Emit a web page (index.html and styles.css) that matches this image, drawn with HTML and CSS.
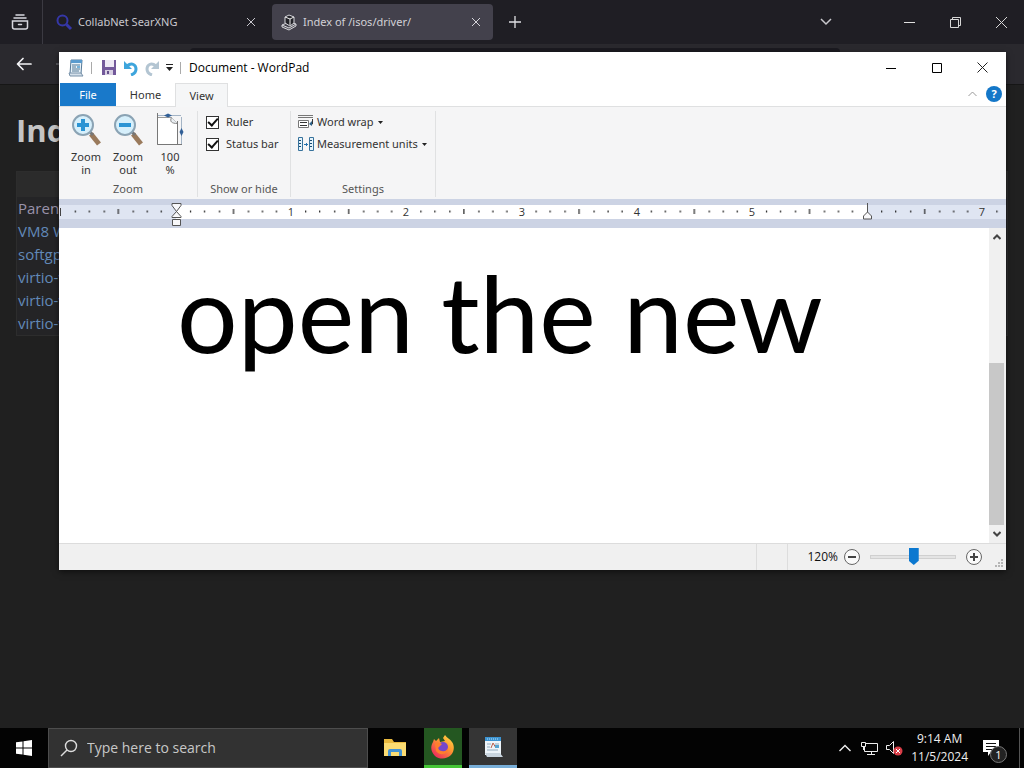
FILE: index.html
```html
<!DOCTYPE html>
<html lang="en">
<head>
<meta charset="utf-8">
<title>Desktop</title>
<link rel="stylesheet" href="styles.css">
</head>
<body>
<div class="desktop">
  <div class="browser">
    <div class="tabstrip">
      <button class="recent" aria-label="Recent browsing">
        <svg width="20" height="20" viewBox="0 0 20 20" fill="none" stroke="#d8d7de" stroke-width="1.500" stroke-linecap="round"><path d="M6 3h8M4 6h12"/><path d="M2.500 9h15v6q0 2-2 2h-11q-2 0-2-2zM8.500 12.500h3"/></svg>
      </button>
      <div class="tab">
        <svg width="17" height="17" viewBox="0 0 17 17" fill="none" stroke="#3537a8"><circle cx="6.500" cy="6.500" r="5" stroke-width="2"/><path d="M10.500 10.500l4.500 4.500" stroke-width="3"/></svg>
        <span class="tab-name">CollabNet SearXNG</span>
        <button class="tab-close" aria-label="Close tab"><svg width="8" height="8" viewBox="0 0 8 8" stroke="#c8c7ce"><path d="M0 0l8 8M8 0L0 8"/></svg></button>
      </div>
      <div class="tab active">
        <svg width="17" height="17" viewBox="0 0 17 17"><path d="M1 11l7-3 7 2-7 4zM1 11v2l7 3 7-4v-2" fill="#55545c" stroke="#d5d5da"/><path d="M4 3l4-2 5 2v6l-4 3-5-3z" fill="#222228" stroke="#d5d5da"/><path d="M4 3l5 2 4-2M9 5v6" fill="none" stroke="#eee"/></svg>
        <span class="tab-name">Index of /isos/driver/</span>
        <button class="tab-close" aria-label="Close tab"><svg width="8" height="8" viewBox="0 0 8 8" stroke="#d5d4da"><path d="M0 0l8 8M8 0L0 8"/></svg></button>
      </div>
      <button class="new-tab" aria-label="New tab"><svg width="12" height="12" viewBox="0 0 12 12" stroke="#e0e0e4" stroke-width="1.300"><path d="M6 0v12M0 6h12"/></svg></button>
      <div class="strip-end">
        <button class="list-tabs" aria-label="List all tabs"><svg width="12" height="8" viewBox="0 0 12 8" fill="none" stroke="#c9c9cd" stroke-width="1.500"><path d="M1 1l5 5 5-5"/></svg></button>
        <button class="caption" aria-label="Minimize"><svg width="11" height="11" viewBox="0 0 11 11" stroke="#e0e0e0"><path d="M0 5.500h11"/></svg></button>
        <button class="caption" aria-label="Restore"><svg width="11" height="11" viewBox="0 0 11 11" fill="none" stroke="#d8d8d8"><path d="M.5 2.500h8v8h-8zM2.500 2V.5h8v8H9"/></svg></button>
        <button class="caption" aria-label="Close"><svg width="11" height="11" viewBox="0 0 11 11" stroke="#d8d8d8"><path d="M0 0l11 11M11 0L0 11"/></svg></button>
      </div>
    </div>
    <div class="navbar">
      <button aria-label="Back"><svg width="16" height="14" viewBox="0 0 16 14" fill="none" stroke="#f4f4f6" stroke-width="1.700" stroke-linecap="round" stroke-linejoin="round"><path d="M15 7H2M7 1.500L1.500 7 7 12.500"/></svg></button>
      <button aria-label="Forward"><svg width="16" height="14" viewBox="0 0 16 14" fill="none" stroke="#66656c" stroke-width="1.500"><path d="M0 7h14M9 1.500L14.500 7 9 12.500"/></svg></button>
      <input class="url" type="text" aria-label="Address">
    </div>
    <div class="page">
      <h1>Index</h1>
      <table class="listing">
        <thead><tr><th></th></tr></thead>
        <tbody>
          <tr><td><a class="visited" href="#">Parent</a></td></tr>
          <tr><td><a href="#">VM8 W</a></td></tr>
          <tr><td><a href="#">softgpu</a></td></tr>
          <tr><td><a href="#">virtio-win</a></td></tr>
          <tr><td><a href="#">virtio-win</a></td></tr>
          <tr><td><a href="#">virtio-win</a></td></tr>
        </tbody>
      </table>
    </div>
  </div>

  <div class="wordpad">
    <div class="titlebar">
      <svg width="16" height="18" viewBox="0 0 16 18"><path d="M3 1h11l-1 14H2z" fill="#e9f3fa" stroke="#557896"/><path d="M3 1h11v3H3z" fill="#5a9bce"/><path d="M4 6h8M4 8h4M4 10h8M4 12h7" stroke="#527692"/><path d="M9 7h3v2H9z" fill="#75b2da"/><path d="M1 14h12l2 3H2z" fill="#d4e0ea" stroke="#7690a8"/></svg>
      <span class="bar"></span>
      <button class="save" aria-label="Save"><svg width="14" height="15" viewBox="0 0 14 15"><path d="M0 0h14v15H0z" fill="#73599b"/><path d="M3 0h9v7H3z" fill="#eee9f5"/><path d="M3 10h8v5H3z" fill="#d8d0e3"/><path d="M5 11h2v3H5z" fill="#65518b"/></svg></button>
      <button aria-label="Undo"><svg width="14" height="16" viewBox="0 0 14 16"><path d="M0 1v8h8z" fill="#3ea5dc"/><path d="M3 6c5-4 9-1 9 3 0 3-2 5-5 6" fill="none" stroke="#3ea5dc" stroke-width="3"/></svg></button>
      <button aria-label="Redo"><svg width="14" height="16" viewBox="0 0 14 16"><path d="M14 1v8H6z" fill="#b3c5d2"/><path d="M11 6c-5-4-9-1-9 3 0 3 2 5 5 6" fill="none" stroke="#b3c5d2" stroke-width="3"/></svg></button>
      <button aria-label="Customize toolbar"><svg width="7" height="7" viewBox="0 0 7 7"><path d="M0 0h7v1H0zM0 3h7L3.500 7z" fill="#222"/></svg></button>
      <span class="bar"></span>
      <span class="title">Document - WordPad</span>
      <div class="captions">
        <button class="caption" aria-label="Minimize"><svg width="10" height="10" viewBox="0 0 10 10" stroke="#000"><path d="M0 5.500h10"/></svg></button>
        <button class="caption" aria-label="Maximize"><svg width="10" height="10" viewBox="0 0 10 10" fill="none" stroke="#000"><path d="M.5.5h9v9h-9z"/></svg></button>
        <button class="caption" aria-label="Close"><svg width="11" height="11" viewBox="0 0 11 11" stroke="#222"><path d="M.5.5l10 10M10.500.5l-10 10"/></svg></button>
      </div>
    </div>

    <div class="ribbon-tabs">
      <button class="file">File</button>
      <button class="rtab">Home</button>
      <button class="rtab current">View</button>
      <div class="tabs-end">
        <button aria-label="Collapse ribbon"><svg width="9" height="6" viewBox="0 0 9 6" fill="none" stroke="#999"><path d="M.5 5l4-4 4 4"/></svg></button>
        <button class="help" aria-label="Help">?</button>
      </div>
    </div>

    <div class="ribbon">
      <section class="group zoom-group">
        <div class="tools">
          <button class="tool"><svg width="30" height="33" viewBox="0 0 30 33"><path d="M20 21l8 10" stroke="#9a7a5c" stroke-width="5"/><path d="M18 18l4 4" stroke="#777" stroke-width="3"/><circle cx="12" cy="12" r="10" fill="#d6effb" stroke="#8ba3b4" stroke-width="2"/><path d="M12 6v12M6 12h12" stroke="#2b94d4" stroke-width="4"/></svg>Zoom<br>in</button>
          <button class="tool"><svg width="30" height="33" viewBox="0 0 30 33"><path d="M20 21l8 10" stroke="#9a7a5c" stroke-width="5"/><path d="M18 18l4 4" stroke="#777" stroke-width="3"/><circle cx="12" cy="12" r="10" fill="#d6effb" stroke="#8ba3b4" stroke-width="2"/><path d="M6 12h12" stroke="#2b94d4" stroke-width="4"/></svg>Zoom<br>out</button>
          <button class="tool"><svg width="30" height="33" viewBox="0 0 30 33"><path d="M2.500 4.500h14l6 6v21h-20z" fill="#fff" stroke="#999"/><path d="M16.500 4.500c-2 4 0 6 6 6" fill="#e9eef2" stroke="#888"/><path d="M2.500 0v31.500M27 31.500H2.500M22.500 8v23" fill="none" stroke="#777"/><path d="M3 2.500h23M26.500 4v27" stroke="#a4b4c5"/><path d="M9 2.500l4-2v4zM17 2.500l-4-2v4zM26.500 15l-2 4h4zM26.500 23l-2-4h4z" fill="#315f96"/></svg>100<br>%</button>
        </div>
        <h2>Zoom</h2>
      </section>
      <section class="group show-group">
        <div class="options">
          <label><input type="checkbox" checked>Ruler</label>
          <label><input type="checkbox" checked>Status bar</label>
        </div>
        <h2>Show or hide</h2>
      </section>
      <section class="group settings-group">
        <div class="options">
          <button><svg width="16" height="16" viewBox="0 0 16 16" fill="none"><path d="M0 1.500h15M0 3.500h15" stroke="#777"/><path d="M.5 6.500h10v7H.5z" fill="#fff" stroke="#777"/><path d="M2 8.500h7M2 11.500h7M14.500 5v5h-2" stroke="#333"/><path d="M11 10l3-3v5z" fill="#2d6289"/></svg>Word wrap<svg class="drop" width="5" height="3" viewBox="0 0 5 3"><path d="M0 0h5L2.500 3z" fill="#222"/></svg></button>
          <button><svg width="16" height="16" viewBox="0 0 16 16" fill="none"><path d="M.5 1.500h4v13h-4zM11.500 1.500h4v13h-4z" fill="#e5f3fb" stroke="#37729c"/><path d="M1 4.500h2M1 7.500h2M1 10.500h2M12 4.500h2M12 7.500h2M12 10.500h2" stroke="#174a72"/><path d="M6 8.500h4M8.500 7v3" stroke="#2472ae"/></svg>Measurement units<svg class="drop" width="5" height="3" viewBox="0 0 5 3"><path d="M0 0h5L2.500 3z" fill="#222"/></svg></button>
        </div>
        <h2>Settings</h2>
      </section>
    </div>

    <div class="ruler">
      <svg width="100%" height="29">
        <defs><pattern id="inch" x="117" y="0" width="115.200" height="29" patternUnits="userSpaceOnUse"><path d="M14.500 11.500v2M28.500 11.500v2M43.500 11.500v2M57.500 10v5M72.500 11.500v2M86.500 11.500v2M100.500 11.500v2" stroke="#222" stroke-width="1.200"/></pattern></defs>
        <rect width="100%" height="29" fill="#ccd3e4"/>
        <rect y="6" width="100%" height="14" fill="#dfe5f2"/>
        <rect x="117" y="6" width="691" height="14" fill="#fff"/>
        <rect width="100%" height="29" fill="url(#inch)"/>
        <path d="M1.500 9v8" stroke="#444"/>
        <g class="marks"><text x="232" y="17">1</text><text x="347" y="17">2</text><text x="463" y="17">3</text><text x="578" y="17">4</text><text x="693" y="17">5</text><text x="923" y="17">7</text></g>
        <path d="M113 4.500h9v2l-4.500 6-4.500-6zM117.500 12.500l4.500 5v1h-9v-1zM113.500 20.500h8v6h-8zM808.500 4v9l4 4v3h-8v-3l4-4" fill="#f8f8fa" stroke="#555"/>
      </svg>
    </div>

    <div class="document">
      <div class="paper" contenteditable="true" spellcheck="false" role="textbox" aria-label="Document text">open the new</div>
      <div class="scrollbar">
        <button aria-label="Scroll up"><svg width="8" height="6" viewBox="0 0 8 6" fill="none" stroke="#444" stroke-width="2"><path d="M.5 5L4 1.500 7.500 5"/></svg></button>
        <div class="track"><div class="thumb"></div></div>
        <button aria-label="Scroll down"><svg width="8" height="6" viewBox="0 0 8 6" fill="none" stroke="#444" stroke-width="2"><path d="M.5 1L4 4.500 7.500 1"/></svg></button>
      </div>
    </div>

    <div class="statusbar">
      <span class="pane"></span>
      <label class="percent" for="zoom">120%</label>
      <button aria-label="Zoom out"><svg width="16" height="16" viewBox="0 0 16 16" fill="#fafafa" stroke="#666"><circle cx="8" cy="8" r="7.500"/><path d="M4 8h8" stroke="#444" stroke-width="2"/></svg></button>
      <input id="zoom" type="range" min="0" max="100" value="51">
      <button aria-label="Zoom in"><svg width="16" height="16" viewBox="0 0 16 16" fill="#fafafa" stroke="#666"><circle cx="8" cy="8" r="7.500"/><path d="M4 8h8M8 4v8" stroke="#444" stroke-width="2"/></svg></button>
      <svg class="grip" width="10" height="10" viewBox="0 0 10 10" fill="#b5b5b5"><path d="M7 0h2v2H7zM7 3h2v2H7zM4 3h2v2H4zM7 6h2v2H7zM4 6h2v2H4zM1 6h2v2H1z"/></svg>
    </div>
  </div>

  <div class="taskbar">
    <button class="start" aria-label="Start"><svg width="16" height="16" viewBox="0 0 16 16" fill="#fff"><path d="M0 2.300l6.500-.9v6.100H0zM7.500 1.200L16 0v7.500H7.500zM0 8.500h6.500v6.100L0 13.700zM7.500 8.500H16V16l-8.500-1.200z"/></svg></button>
    <label class="search">
      <svg width="18" height="18" viewBox="0 0 18 18" fill="none" stroke="#ddd" stroke-width="1.400"><circle cx="11" cy="7" r="5.500"/><path d="M7 11l-6 6"/></svg>
      <input type="text" placeholder="Type here to search" aria-label="Search">
    </label>
    <div class="apps">
      <button class="app" aria-label="File Explorer"><svg width="22" height="20" viewBox="0 0 22 20"><path d="M0 1h8l2 3h12v14H0z" fill="#e9b93e"/><path d="M0 5h22v13H0z" fill="#fbdc72"/><path d="M4 18v-5q0-2 2-2h10q2 0 2 2v5h-3v-4H7v4z" fill="#4393d4"/></svg></button>
      <button class="app firefox" aria-label="Firefox"><svg width="24" height="24" viewBox="0 0 24 24"><defs><linearGradient id="fire" x1="1" y1="0" x2="0.200" y2="1"><stop offset="0" stop-color="#ffe34b"/><stop offset=".45" stop-color="#ff9830"/><stop offset="1" stop-color="#ed2460"/></linearGradient></defs><path d="M2 7l1-3 2 2 3-3 1 4 5-1-2-3 2-3c2 3 5 4 7 7 3 4 2 10-1 13-4 4-11 5-16 1-4-4-5-9-2-14z" fill="url(#fire)"/><circle cx="12" cy="12" r="5" fill="#7546c9"/><path d="M4 9c2-3 5-1 7 0l-3 3c-2 1 0 4 3 4 3 1 5-1 6-3 0 7-9 8-12 3z" fill="#ff7e2d"/></svg></button>
      <button class="app current" aria-label="WordPad"><svg width="20" height="22" viewBox="0 0 20 22"><path d="M2 1h16v18H2z" fill="#edf4f9"/><path d="M2 1h16v4H2z" fill="#3c93d1"/><path d="M4 3h12" stroke="#b9e1f7" stroke-dasharray="1 1"/><path d="M4 8h4M4 11h3M4 14h11M12 8h4" stroke="#91aabd"/><path d="M8 12l2-5 3 5" fill="none" stroke="#b65d4c"/><path d="M12 9h4v3h-4z" fill="#56a4d1"/><path d="M2 17h15l3 4H4z" fill="#c9d5df"/></svg></button>
    </div>
    <div class="tray">
      <button aria-label="Show hidden icons"><svg width="12" height="8" viewBox="0 0 12 8" fill="none" stroke="#eee" stroke-width="1.400"><path d="M.5 7L6 1.500 11.500 7"/></svg></button>
      <button aria-label="Network"><svg width="17" height="15" viewBox="0 0 17 15" fill="none" stroke="#eee"><path d="M5 2.500h11.500v8H3.500V6M10.500 11v3M6 13.500h8"/><path d="M.5 1.500h4v4h-4zM2.500 6v3"/></svg></button>
      <button aria-label="Volume"><svg width="17" height="16" viewBox="0 0 17 16"><path d="M.5 5.500h3l4-4v12l-4-4h-3z" fill="none" stroke="#eee"/><circle cx="12" cy="11" r="4.500" fill="#d93e48"/><path d="M10 9l4 4M14 9l-4 4" stroke="#fff"/></svg></button>
      <div class="clock"><time>9:14 AM</time><time>11/5/2024</time></div>
      <button class="notice" aria-label="Notifications"><svg width="16" height="16" viewBox="0 0 16 16"><path d="M0 0h16v12H8l-3 4v-4H0z" fill="#fff"/><path d="M3 3.500h10M3 6.500h10M3 9.500h6" stroke="#111"/></svg><span class="badge">1</span></button>
    </div>
  </div>
</div>
</body>
</html>
```

FILE: styles.css
```css
* { box-sizing: border-box; }
body { margin: 0; background: #202020; font: 12px/16px "Noto Sans", "Open Sans", sans-serif; }
button { display: flex; align-items: center; justify-content: center; margin: 0; padding: 0; border: 0; background: none; color: inherit; font: inherit; }
input { font: inherit; }
svg { display: block; flex: none; }

.desktop { position: relative; display: flex; flex-direction: column; height: 100vh; overflow: hidden; }
.browser { flex: 1; display: flex; flex-direction: column; min-height: 0; overflow: hidden; }

.tabstrip { display: flex; align-items: center; height: 44px; background: #1f1e24; color: #c9c8ce; font: 11px/16px "Noto Sans", sans-serif; }
.recent { width: 43px; height: 44px; padding-right: 2px; border-right: 1px solid #3b3a42; }
.tab { display: flex; align-items: center; gap: 4px; width: 221px; height: 36px; margin-left: 4px; padding: 0 13px 0 9px; border-radius: 4px; }
.tab + .tab { margin-left: 4px; }
.tab.active { background: #43414c; color: #d2d1d7; }
.tab-name { flex: 1; padding-left: 1px; white-space: nowrap; }
.new-tab { width: 43px; height: 36px; }
.strip-end { display: flex; align-items: center; margin-left: auto; }
.list-tabs { width: 36px; height: 36px; margin-right: 42px; }
.caption { width: 46px; height: 30px; }

.navbar { display: flex; align-items: center; height: 41px; padding: 0 4px; background: #2a292e; border-bottom: 1px solid #161616; }
.navbar button { width: 40px; height: 32px; }
.url { flex: 1; height: 32px; margin: 0 180px 0 106px; border: 0; border-radius: 4px; background: #1b1a20; }

.page { flex: 1; padding: 26px 16px; color: #c4c4c4; font: 15px/23px "Open Sans", sans-serif; }
h1 { margin: 0 0 22px; font: bold 31px/38px "Open Sans", sans-serif; }
.listing { width: 100%; border: 1px solid #2d2d2d; border-spacing: 0; background: #242426; }
.listing th { height: 25px; padding: 0; background: #2b2b2b; }
.listing td { padding: 0 1px; }
.listing a { color: #6289b8; text-decoration: none; }
.listing a.visited { color: #9992aa; }

.wordpad { position: absolute; left: 59px; right: 18px; top: 52px; bottom: 198px; display: flex; flex-direction: column; background: #fff; color: #333; box-shadow: 0 2px 6px #0008; }
.titlebar { display: flex; align-items: center; height: 31px; padding-left: 9px; gap: 8px; color: #000; }
.titlebar svg { margin-right: -1px; }
.bar { width: 1px; height: 12px; background: #aaa; }
.save { padding: 0 1px 0 2px; }
.title { font: 12px/16px "Open Sans", sans-serif; white-space: nowrap; }
.captions { display: flex; margin-left: auto; padding-right: 1px; }

.ribbon-tabs { display: flex; height: 24px; padding-left: 1px; border-bottom: 1px solid #dfe0e1; font-size: 11px; }
.file { width: 56px; height: 23px; background: #1979ca; color: #fff; }
.rtab { width: 59px; height: 23px; }
.rtab.current { width: 53px; height: 24px; border: 1px solid #dfe0e1; border-bottom: 0; background: #f5f6f7; }
.tabs-end { display: flex; align-items: center; gap: 9px; margin-left: auto; padding: 0 4px 2px 0; }
.help { width: 16px; height: 16px; border-radius: 50%; background: #1477c8; color: #fff; font-weight: bold; }

.ribbon { display: flex; height: 92px; padding: 4px 0 2px; background: #f5f5f6; font-size: 11px; }
.group { display: flex; flex-direction: column; justify-content: space-between; border-right: 1px solid #e0e1e2; }
.group h2 { margin: 0; color: #555; font: 11px/16px "Noto Sans", sans-serif; text-align: center; }
.zoom-group { width: 139px; }
.show-group { width: 93px; }
.settings-group { width: 145px; }
.tools { display: flex; padding: 2px 0 0 6px; }
.tool { flex-direction: column; width: 42px; line-height: 13px; }
.tool svg { margin-bottom: 4px; }
.options { display: flex; flex-direction: column; padding-left: 8px; }
.settings-group .options { padding-left: 7px; }
.options label, .options button { display: flex; align-items: center; justify-content: flex-start; height: 22px; white-space: nowrap; }
.options label { gap: 7px; }
.options button { gap: 3px; }
.options input { appearance: none; width: 13px; height: 13px; margin: 0; border: 1px solid #333; background: #fff; display: grid; place-items: center; }
.options input:checked::before { content: ""; width: 8px; height: 4px; border: solid #111; border-width: 0 0 2px 2px; rotate: -48deg; margin-bottom: 3px; }
.options .drop { margin-left: 1px; }

.ruler { height: 29px; overflow: hidden; }
.marks { fill: #333; font: 11px "Open Sans", sans-serif; text-anchor: middle; }

.document { flex: 1; display: flex; min-height: 0; background: #fff; }
.paper { flex: 1; padding: 18px 118px; color: #000; font: 107px/132px Lato, sans-serif; white-space: nowrap; outline: 0; }
.scrollbar { display: flex; flex-direction: column; width: 17px; padding-right: 2px; background: #f0f0f0; }
.scrollbar button { height: 18px; }
.track { flex: 1; display: flex; flex-direction: column; justify-content: flex-end; }
.thumb { height: 58%; background: #c8c8c8; }

.statusbar { display: flex; align-items: center; height: 27px; border-top: 1px solid #dcdcdc; background: #f0f0f0; color: #111; }
.pane { width: 32px; height: 100%; margin-left: auto; border: solid #ddd; border-width: 0 1px; }
.percent { width: 56px; padding-right: 6px; text-align: right; font: 12px/16px "Open Sans", sans-serif; }
.statusbar input { appearance: none; width: 86px; height: 18px; margin: 0 10px; background: none; }
.statusbar input::-webkit-slider-runnable-track { height: 4px; border: 1px solid #d0d0d0; background: #e4e4e4; }
.statusbar input::-webkit-slider-thumb { appearance: none; width: 10px; height: 17px; margin-top: -8px; background: #0b78d0; clip-path: polygon(0 0, 100% 0, 100% 75%, 50% 100%, 0 75%); }
.grip { align-self: flex-end; margin: 0 2px 1px 12px; }

.taskbar { display: flex; height: 40px; background: #030303; color: #eee; }
.start { width: 48px; }
.search { flex: 0 1 320px; display: flex; align-items: center; gap: 9px; padding: 0 12px 0 11px; border: 1px solid #4d4d4d; background: #323232; }
.search input { flex: 1; min-width: 0; padding: 0; border: 0; background: none; outline: 0; color: #ccc; font: 14px/20px "Open Sans", sans-serif; }
.search input::placeholder { color: #c8c8c8; opacity: 1; }
.apps { display: flex; padding-left: 8px; }
.app { width: 38px; }
.app:first-child { margin-right: 10px; }
.firefox { background: #245721; border-bottom: 3px solid #45c636; }
.app.current { width: 48px; margin-left: 7px; background: #353535; border-bottom: 3px solid #78aed8; }
.tray { display: flex; align-items: center; gap: 8px; margin-left: auto; margin-right: 4px; padding-right: 4px; border-right: 1px solid #555; }
.tray > button { height: 40px; }
.tray > button:first-child { margin-right: 2px; }
.clock { display: flex; flex-direction: column; align-items: center; font: 12px/18px "Open Sans", sans-serif; padding: 0 7px 0 0; }
.notice { position: relative; width: 32px; justify-content: flex-start; }
.badge { position: absolute; left: 7px; top: 18px; width: 17px; height: 17px; border: 1px solid #777; border-radius: 50%; background: #222; font-size: 11px; line-height: 15px; }
```
